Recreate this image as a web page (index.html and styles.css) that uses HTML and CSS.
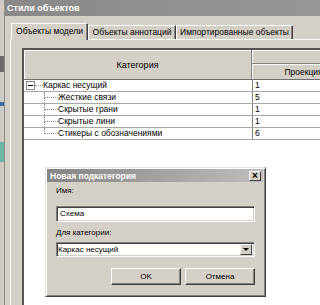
FILE: index.html
```html
<!DOCTYPE html>
<html lang="ru">
<head>
  <meta charset="UTF-8">
  <title>Стили объектов</title>
  <link rel="stylesheet" href="styles.css">
</head>
<body>
  <div class="screen">
    <div class="side">
      <div class="side-block gap-a"></div>
      <div class="side-block dark"></div>
      <div class="side-block gap-b"></div>
      <div class="side-block blue"></div>
      <div class="side-block gap-c"></div>
      <div class="side-block teal"></div>
    </div>

    <div class="win">
      <div class="win-title">Стили объектов</div>
      <div class="win-body">
        <div class="tabs">
          <div class="tab active">Объекты модели</div>
          <div class="tab tab-ann">Объекты аннотаций</div>
          <div class="tab tab-imp">Импортированные объекты</div>
        </div>
        <div class="panel">
          <div class="grid">
            <div class="head">
              <div class="head-cat">Категория</div>
              <div class="head-right">
                <div class="head-top"></div>
                <div class="head-proj">Проекция</div>
              </div>
            </div>

            <div class="row">
              <div class="cat root">
                <span class="toggle"></span><span class="stub"></span>Каркас несущий
              </div>
              <div class="val">1</div>
            </div>
            <div class="row">
              <div class="cat child">
                <span class="branch"><span class="branch-top"></span><span class="branch-bottom"></span></span>Жесткие связи
              </div>
              <div class="val">5</div>
            </div>
            <div class="row">
              <div class="cat child">
                <span class="branch"><span class="branch-top"></span><span class="branch-bottom"></span></span>Скрытые грани
              </div>
              <div class="val">1</div>
            </div>
            <div class="row">
              <div class="cat child">
                <span class="branch"><span class="branch-top"></span><span class="branch-bottom"></span></span>Скрытые лини
              </div>
              <div class="val">1</div>
            </div>
            <div class="row">
              <div class="cat child last">
                <span class="branch"><span class="branch-top"></span><span class="branch-bottom"></span></span>Стикеры с обозначениями
              </div>
              <div class="val">6</div>
            </div>
          </div>
        </div>
      </div>
    </div>

    <!-- modal over the grid -->
    <div class="dialog">
      <div class="dlg-title">
        <span>Новая подкатегория</span>
        <span class="dlg-close">×</span>
      </div>
      <div class="dlg-body">
        <div class="dlg-label first">Имя:</div>
        <div class="field">Схема</div>
        <div class="dlg-label">Для категории:</div>
        <div class="field select">
          <span class="select-text">Каркас несущий</span>
          <span class="select-btn"><span class="arrow"></span></span>
        </div>
        <div class="buttons">
          <div class="btn">OK</div>
          <div class="btn">Отмена</div>
        </div>
      </div>
    </div>
  </div>
</body>
</html>
```

FILE: styles.css
```css
* {
  margin:0;
  padding:0;
  box-sizing:border-box;
}

body {
  width:320px;
  height:305px;
  overflow:hidden;
  background:#fff;
  font-family:"Liberation Sans", Arial, sans-serif;
  font-size:8.5px;
  color:#000;
}

.screen {
  position:relative;
  display:flex;
  width:320px;
  height:305px;
  overflow:hidden;
}

/* strip of the window behind */
.side {
  flex:none;
  width:5px;
  display:flex;
  flex-direction:column;
  background:#cfcbc3;
  border-right:1px solid #8c8c8c;
}
.side-block { flex:none; }
.gap-a { height:56px; }
.dark { height:16px; background:#6a6a6a; }
.gap-b { height:30px; }
.blue { height:4px; background:#3c6ea8; }
.gap-c { height:36px; }
.teal { height:20px; background:#6cb8a4; }

/* main window */
.win {
  flex:none;
  width:380px;
  display:flex;
  flex-direction:column;
  background:#d4d0c8;
}

.win-title {
  height:16px;
  padding-left:2px;
  background:linear-gradient(to right, #898989, #9a9a9a);
  color:#fff;
  font-weight:bold;
  font-size:9px;
  line-height:16px;
}

.win-body {
  flex:1;
  display:flex;
  flex-direction:column;
  padding:7px 0 0 5px;
}

.tabs {
  display:flex;
  align-items:flex-end;
  height:16px;
  padding-left:1px;
}

.tab {
  flex:none;
  height:14px;
  line-height:13px;
  text-align:center;
  background:#d4d0c8;
  border-top:1px solid #fff;
  border-left:1px solid #fff;
  border-right:1px solid #404040;
  box-shadow:inset -1px 0 #808080;
}
.tab.active {
  position:relative;
  z-index:1;
  width:77px;
  height:17px;
  margin-bottom:-1px;
  line-height:15px;
}
.tab-ann { width:88px; }
.tab-imp { width:117px; }

.panel {
  flex:1;
  display:flex;
  flex-direction:column;
  padding:8px 0 0 11px;
  border-top:1px solid #fff;
  border-left:1px solid #fff;
}

/* category grid */
.grid {
  flex:1;
  background:#fff;
  border-top:2px solid #555;
  border-left:2px solid #555;
}

.head {
  display:flex;
  height:30px;
  border-bottom:1px solid #6e6e6e;
}

.head-cat {
  flex:none;
  width:228px;
  display:flex;
  align-items:center;
  justify-content:center;
  font-size:9px;
  background:#d4d0c8;
  border-right:1px solid #808080;
  box-shadow:inset 1px 1px #fff;
}

.head-right {
  flex:none;
  width:104px;
  display:flex;
  flex-direction:column;
}

.head-top {
  height:14px;
  background:#d4d0c8;
  border-bottom:1px solid #808080;
  box-shadow:inset 1px 1px #fff;
}

.head-proj {
  flex:1;
  display:flex;
  align-items:center;
  justify-content:center;
  background:#d4d0c8;
  border-right:1px solid #808080;
  box-shadow:inset 1px 1px #fff;
}

.row {
  display:flex;
  height:12px;
  border-bottom:1px solid #a8a8a8;
  line-height:11px;
}

.cat {
  flex:none;
  width:228px;
  display:flex;
  align-items:stretch;
  white-space:nowrap;
}

.val {
  flex:1;
  padding-left:2px;
  border-left:1px solid #808080;
}

.root { padding-left:2px; }

.toggle {
  flex:none;
  position:relative;
  width:9px;
  height:9px;
  margin-top:1px;
  border:1px solid #8a8a8a;
  background:#fff;
}
.toggle::after {
  content:"";
  position:absolute;
  left:1px;
  top:3px;
  width:5px;
  height:1px;
  background:#000;
}

.stub {
  flex:none;
  width:8px;
  height:6px;
  border-bottom:1px dotted #8a8a8a;
}

.child { padding-left:20px; }

.branch {
  flex:none;
  width:14px;
  display:flex;
  flex-direction:column;
}
.branch-top {
  height:6px;
  border-left:1px dotted #8a8a8a;
  border-bottom:1px dotted #8a8a8a;
}
.branch-bottom {
  flex:1;
  border-left:1px dotted #8a8a8a;
}
.last .branch-bottom { border-left:none; }

/* dialog */
.dialog {
  position:absolute;
  left:45px;
  top:167px;
  width:221px;
  height:130px;
  display:flex;
  flex-direction:column;
  padding:1px 2px 2px 1px;
  background:#d4d0c8;
  border:1px solid;
  border-color:#e4e2dc #404040 #404040 #e4e2dc;
  box-shadow:inset 1px 1px #fff, inset -1px -1px #808080;
}

.dlg-title {
  height:13px;
  display:flex;
  align-items:center;
  justify-content:space-between;
  padding:0 2px 0 3px;
  background:linear-gradient(to right, #858585, #bdbdbd);
  color:#fff;
  font-weight:bold;
  font-size:8.5px;
}

.dlg-close {
  width:12px;
  height:10px;
  display:flex;
  align-items:center;
  justify-content:center;
  background:#d4d0c8;
  color:#000;
  font-size:10px;
  font-weight:bold;
  line-height:10px;
  border:1px solid;
  border-color:#fff #404040 #404040 #fff;
}

.dlg-body {
  display:flex;
  flex-direction:column;
  padding:0 8px 0 9px;
  font-size:8px;
}

.dlg-label {
  margin-top:5px;
  line-height:12px;
}
.dlg-label.first { margin-top:3px; }

.field {
  height:16px;
  margin-top:9px;
  padding-left:3px;
  line-height:14px;
  background:#fff;
  border:1px solid;
  border-color:#808080 #fff #fff #808080;
  box-shadow:inset 1px 1px #404040, inset -1px -1px #d4d0c8;
}

.field.select {
  height:15px;
  margin-top:3px;
  padding:0 2px 0 1px;
  display:flex;
  align-items:center;
  justify-content:space-between;
  line-height:12px;
}

.select-btn {
  width:12px;
  height:11px;
  display:flex;
  align-items:center;
  justify-content:center;
  background:#d4d0c8;
  border:1px solid;
  border-color:#fff #404040 #404040 #fff;
}
.arrow {
  width:0;
  height:0;
  border-left:3px solid transparent;
  border-right:3px solid transparent;
  border-top:3px solid #000;
}

.buttons {
  display:flex;
  justify-content:flex-end;
  gap:4px;
  margin-top:11px;
}

.btn {
  width:70px;
  height:17px;
  line-height:15px;
  text-align:center;
  background:#d4d0c8;
  border:1px solid;
  border-color:#fff #404040 #404040 #fff;
  box-shadow:inset -1px -1px #808080;
}
```
